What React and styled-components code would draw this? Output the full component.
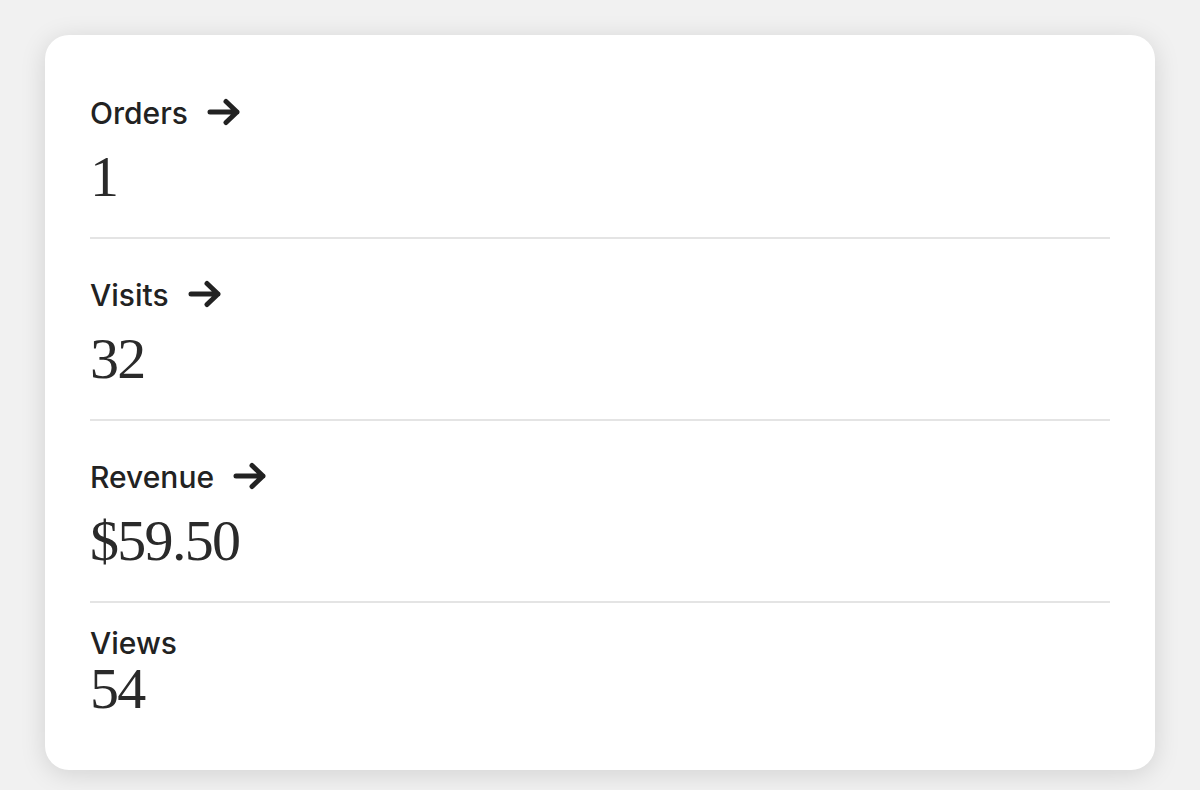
import React from "react";
import styled, { createGlobalStyle } from "styled-components";

const GlobalStyle = createGlobalStyle`
  html, body {
    margin: 0;
    padding: 0;
    background: #f1f1f1;
  }
`;

const stats = [
  { id: 1, label: "Orders", value: "1", link: true },
  { id: 2, label: "Visits", value: "32", link: true },
  { id: 3, label: "Revenue", value: "$59.50", link: true },
  { id: 4, label: "Views", value: "54", link: false },
];

const Arrow = () => (
  <svg width="34" height="28" viewBox="0 0 34 28" fill="none">
    <path
      d="M3 14H30M19 3.5L30 14L19 24.5"
      stroke="#222"
      strokeWidth="5"
      strokeLinecap="round"
      strokeLinejoin="round"
    />
  </svg>
);

const App = () => {
  return (
    <>
      <GlobalStyle />
      <Page>
        <Card>
          {stats.map((s, i) => (
            <Stat key={s.id} $first={i === 0} $last={i === stats.length - 1}>
              <Label $link={s.link}>
                <span>{s.label}</span>
                {s.link && <Arrow />}
              </Label>
              <Value>{s.value}</Value>
            </Stat>
          ))}
        </Card>
      </Page>
    </>
  );
};

const Page = styled.div`
  width: 1200px;
  height: 790px;
  box-sizing: border-box;
  padding: 35px 45px 20px;
`;

const Card = styled.div`
  background: #fff;
  border-radius: 24px;
  box-shadow: 0 4px 26px rgba(0, 0, 0, 0.13);
  padding: 22px 45px 0;
  height: 735px;
  box-sizing: border-box;
`;

const Stat = styled.div`
  border-top: ${(p) => (p.$first ? "none" : "2px solid #e4e4e4")};
  padding: ${(p) => (p.$last ? "22px 0 0" : "38px 0 30px")};
`;

const Label = styled.div`
  display: flex;
  align-items: center;
  gap: 19px;
  height: 36px;
  margin-bottom: ${(p) => (p.$link ? "16px" : "-2px")};
  font-family: "Inter", "Liberation Sans", sans-serif;
  font-size: 30px;
  font-weight: 500;
  line-height: 36px;
  color: #222;

  svg {
    margin-top: -3px;
  }
`;

const Value = styled.div`
  font-family: "Liberation Serif", serif;
  font-size: 58px;
  font-weight: 400;
  line-height: 60px;
  letter-spacing: -1.7px;
  color: #2a2a2a;
`;

export default App;
